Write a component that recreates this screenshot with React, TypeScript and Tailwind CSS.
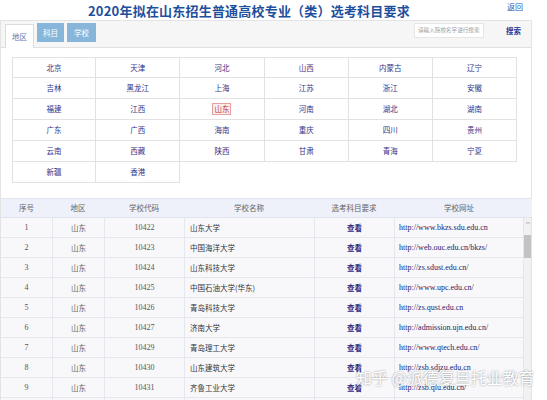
const regions = [
  ['北京', '天津', '河北', '山西', '内蒙古', '辽宁'],
  ['吉林', '黑龙江', '上海', '江苏', '浙江', '安徽'],
  ['福建', '江西', '山东', '河南', '湖北', '湖南'],
  ['广东', '广西', '海南', '重庆', '四川', '贵州'],
  ['云南', '西藏', '陕西', '甘肃', '青海', '宁夏'],
  ['新疆', '香港'],
];

const schools = [
  { code: '10422', name: '山东大学', url: 'http://www.bkzs.sdu.edu.cn' },
  { code: '10423', name: '中国海洋大学', url: 'http://web.ouc.edu.cn/bkzs/' },
  { code: '10424', name: '山东科技大学', url: 'http://zs.sdust.edu.cn/' },
  { code: '10425', name: '中国石油大学(华东)', url: 'http://www.upc.edu.cn/' },
  { code: '10426', name: '青岛科技大学', url: 'http://zs.qust.edu.cn' },
  { code: '10427', name: '济南大学', url: 'http://admission.ujn.edu.cn/' },
  { code: '10429', name: '青岛理工大学', url: 'http://www.qtech.edu.cn/' },
  { code: '10430', name: '山东建筑大学', url: 'http://zsb.sdjzu.edu.cn' },
  { code: '10431', name: '齐鲁工业大学', url: 'http://zsb.qlu.edu.cn/' },
  { code: '10433', name: '山东理工大学', url: 'http://zsb.sdut.edu.cn/' },
];

const cjk = "font-['Noto_Sans_CJK_SC','Noto_Sans',sans-serif]";
const serif = "font-['Liberation_Serif','Noto_Sans_CJK_SC',serif]";

const cols = 'grid grid-cols-[51px_52px_80px_130px_80px_130px]';

export default function App() {
  return (
    <div className={`relative w-[547px] h-[400px] overflow-hidden bg-white ${cjk}`}>
      <div className="flex h-[20px] items-start">
        <h1 className="ml-[88px] mt-[3px] text-[13px] leading-[16px] font-bold text-[#1d4f9c] tracking-[0.2px]">
          2020年拟在山东招生普通高校专业（类）选考科目要求
        </h1>
        <a className="ml-auto mr-[24px] mt-[1px] text-[8px] text-[#2a5aa8]">返回</a>
      </div>

      <div className="w-[532px] border border-[#e3e3e3] border-b-0">
        <div className="flex h-[27px] items-end bg-[#f6f6f6] border-b border-[#e0e0e0] pl-[4px]">
          <div className="flex h-[24px] w-[29px] items-center justify-center bg-white border border-[#dcdcdc] border-b-0 text-[7.5px] text-[#5a7ab0] -mb-px">
            地区
          </div>
          <div className="ml-[3px] mb-[5px] flex h-[19px] w-[27px] items-center justify-center bg-[#88b6da] text-[7.5px] text-white">
            科目
          </div>
          <div className="ml-[3px] mb-[5px] flex h-[19px] w-[29px] items-center justify-center bg-[#88b6da] text-[7.5px] text-white">
            学校
          </div>
          <div className="ml-auto mb-[9px] flex items-center">
            <div className="flex h-[15px] w-[70px] items-center bg-white border border-[#e6e6e6] pl-[3px] text-[5.6px] text-[#9a9a9a] whitespace-nowrap overflow-hidden">
              请输入院校名字进行搜索
            </div>
            <span className="ml-[22px] mr-[10px] text-[7.5px] font-bold text-[#2c3a9a]">搜索</span>
          </div>
        </div>

        <div className="pl-[11px] pt-[9px] pb-[15px]">
          <div className="grid grid-cols-[repeat(6,84.2px)] w-[506px]">
            {regions.flat().map((r, i) => (
              <div
                key={i}
                className={`flex h-[21px] items-center justify-center border-[#e2e2e2] border-r border-b text-[7.5px] ${
                  i % 6 === 0 ? 'border-l' : ''
                } ${i < 6 ? 'border-t' : ''} ${r === '山东' ? 'text-[#c03030]' : 'text-[#33338a]'}`}
              >
                {r === '山东' ? (
                  <span className="border border-[#e6a0a0] bg-[#fbeeee] px-px leading-[10px]">{r}</span>
                ) : (
                  r
                )}
              </div>
            ))}
          </div>
        </div>

        <div className={`${cols} h-[20px] items-center bg-[#eef0fa] border-y border-[#e1e3ef] text-[7.5px] text-[#666] w-[531px]`}>
          <div className="text-center">序号</div>
          <div className="text-center">地区</div>
          <div className="text-center">学校代码</div>
          <div className="text-center">学校名称</div>
          <div className="text-center">选考科目要求</div>
          <div className="text-center">学校网址</div>
        </div>

        <div className="flex">
          <div className="w-[522px]">
            {schools.map((s, i) => (
              <div
                key={i}
                className={`${cols} h-[20px] bg-[#f8f8fb] border-b border-[#e6e6ee] text-[7.5px]`}
              >
                <div className={`flex items-center justify-center ${serif} text-[8px] text-[#555]`}>{i + 1}</div>
                <div className="flex items-center justify-center border-l border-[#e6e6ee] text-[#666]">山东</div>
                <div className={`flex items-center justify-center border-l border-[#e6e6ee] ${serif} text-[8px] text-[#555]`}>
                  {s.code}
                </div>
                <div className="flex items-center pl-[5px] border-l border-[#e6e6ee] text-[#333]">{s.name}</div>
                <div className="flex items-center justify-center border-l border-[#e6e6ee] font-bold text-[#2b2d82]">查看</div>
                <div className={`flex items-center pl-[4px] border-l border-[#e6e6ee] ${serif} text-[8px] text-[#23256a] whitespace-nowrap overflow-hidden`}>
                  {s.url}
                </div>
              </div>
            ))}
          </div>
          <div className="flex w-[9px] h-[200px] flex-col items-center bg-[#f1f1f1] border-l border-[#e6e6e6]">
            <svg width="6" height="6" viewBox="0 0 6 6" className="mt-[2px]">
              <path d="M1 4 L3 2 L5 4" fill="none" stroke="#a0a0a0" strokeWidth="0.8" />
            </svg>
            <div className="mt-[9px] h-[23px] w-[7px] bg-[#c2c2c2]" />
          </div>
        </div>
      </div>

      <div className="pointer-events-none absolute left-[356px] top-[367px] text-[16px] leading-[20px] text-white whitespace-nowrap [text-shadow:0_0_2px_rgba(0,0,0,0.45)]">
        知乎 @派德复旦托业教育
      </div>
    </div>
  );
}
